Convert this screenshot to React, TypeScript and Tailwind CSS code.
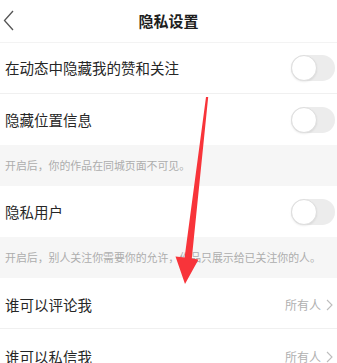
const font = { fontFamily: '"Noto Sans CJK SC", "Noto Sans", sans-serif' };

const Toggle = () => (
  <div className="relative h-[26px] w-[44px] rounded-full bg-[#ececec]">
    <div className="absolute left-0 top-0 h-[26px] w-[26px] rounded-full border border-[#dedede] bg-white shadow-[0_1px_2px_rgba(0,0,0,0.08)]" />
  </div>
);

const SwitchRow = ({ label, border }: { label: string; border?: boolean }) => (
  <div
    className={`flex h-[51px] items-center justify-between pl-[5px] pr-[2px] ${
      border ? "border-b border-[#f0f0f0]" : ""
    }`}
  >
    <span className="text-[14.5px] text-[#262626]">{label}</span>
    <Toggle />
  </div>
);

const Note = ({ text }: { text: string }) => (
  <div className="flex h-[41px] items-center bg-[#f6f6f6] pl-[5px] text-[10.9px] text-[#adadad]">
    {text}
  </div>
);

const LinkRow = ({ label, border }: { label: string; border?: boolean }) => (
  <div
    className={`flex h-[51px] items-center justify-between pl-[5px] pr-[4px] pt-[4px] ${
      border ? "border-b border-[#f0f0f0]" : ""
    }`}
  >
    <span className="text-[14.5px] text-[#262626]">{label}</span>
    <span className="flex items-center gap-[5px] text-[12px] text-[#b0b0b0]">
      所有人
      <svg width="7" height="12" viewBox="0 0 7 12" fill="none">
        <path d="M1 1l5 5-5 5" stroke="#bdbdbd" strokeWidth="1.1" />
      </svg>
    </span>
  </div>
);

export default function App() {
  return (
    <div className="relative h-[363px] w-[337px] overflow-hidden bg-white" style={font}>
      <div className="relative flex h-[43px] items-center justify-center border-b border-[#f3f3f3]">
        <svg className="absolute left-[3px] top-[10px]" width="12" height="21" viewBox="0 0 12 21" fill="none">
          <path d="M10 1L1.5 10.5 10 20" stroke="#555" strokeWidth="1.3" />
        </svg>
        <span className="text-[15px] font-bold text-[#1e1e1e]">隐私设置</span>
      </div>
      <SwitchRow label="在动态中隐藏我的赞和关注" border />
      <SwitchRow label="隐藏位置信息" />
      <Note text="开启后，你的作品在同城页面不可见。" />
      <SwitchRow label="隐私用户" />
      <Note text="开启后，别人关注你需要你的允许，作品只展示给已关注你的人。" />
      <LinkRow label="谁可以评论我" border />
      <LinkRow label="谁可以私信我" />

      <svg className="pointer-events-none absolute left-0 top-0" width="337" height="363" viewBox="0 0 337 363">
        <polygon
          points="206,97 208.2,97 191.8,258.4 198.5,259.5 185,284 175.5,256.5 184.6,257.6"
          fill="#f8343a"
        />
      </svg>
    </div>
  );
}
